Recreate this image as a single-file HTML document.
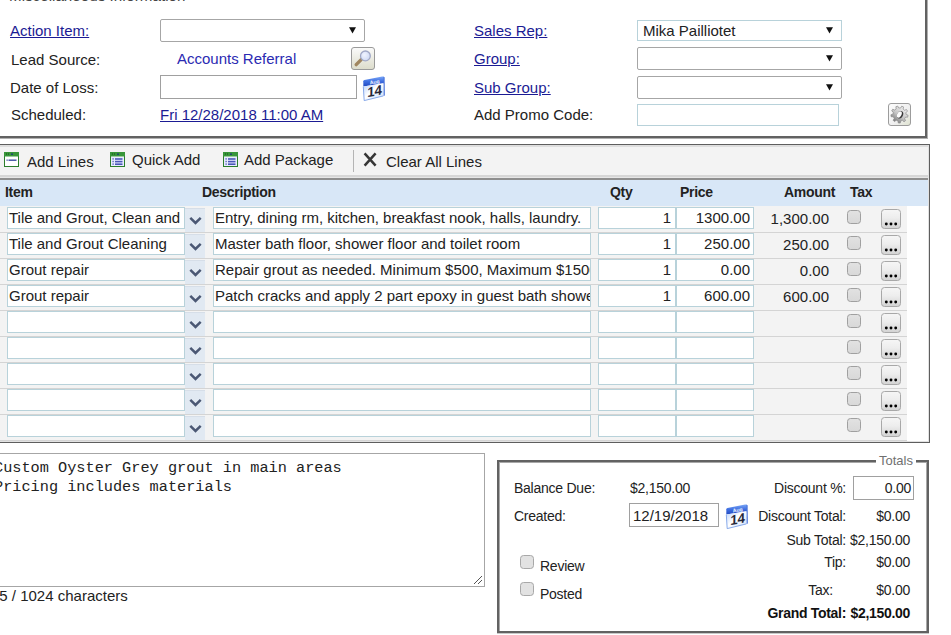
<!DOCTYPE html><html><head><meta charset="utf-8"><style>
html,body{margin:0;padding:0;background:#fff;width:951px;height:635px;overflow:hidden;position:relative}
body{font-family:"Liberation Sans",sans-serif}
.t{position:absolute;white-space:nowrap;line-height:18px}
.b{position:absolute;box-sizing:border-box}
.u{text-decoration:underline}
svg{position:absolute;overflow:visible}
</style></head><body>
<div class="t" style="left:9px;top:-13px;font-size:15.2px;color:#444;">Miscellaneous Information</div>
<div class="b" style="left:925px;top:0px;width:2px;height:138px;background:#626262"></div>
<div class="b" style="left:0px;top:136px;width:927px;height:2px;background:#626262"></div>
<div class="b" style="left:927px;top:0px;width:1px;height:139px;background:#b0b0b0"></div>
<div class="b" style="left:0px;top:138px;width:928px;height:1px;background:#b0b0b0"></div>
<div class="t" style="left:10px;top:22px;font-size:15px;color:#1b1b94;text-decoration:underline">Action Item:</div>
<div class="b" style="left:160px;top:19px;width:205px;height:23px;border:1px solid #a6a6a6;border-radius:2px;background:#fff"></div>
<svg style="left:349px;top:27px" width="7" height="7" viewBox="0 0 7 7"><path d="M0 0.3 L7 0.3 L3.5 6.5 Z" fill="#111"/></svg>
<div class="t" style="left:11px;top:51px;font-size:15px;color:#222;">Lead Source:</div>
<div class="t" style="left:177px;top:50px;font-size:15px;color:#2a2ab2;">Accounts Referral</div>
<svg style="left:351px;top:47px" width="24" height="23" viewBox="0 0 24 23">
<defs><linearGradient id="mg" x1="0" y1="0" x2="0" y2="1"><stop offset="0" stop-color="#fbfbfb"/><stop offset="1" stop-color="#dcdccb"/></linearGradient>
<radialGradient id="lens" cx="0.4" cy="0.4" r="0.6"><stop offset="0" stop-color="#f0f4ff"/><stop offset="1" stop-color="#d0daf4"/></radialGradient></defs>
<rect x="0.5" y="0.5" width="23" height="22" rx="2.5" fill="url(#mg)" stroke="#9a9a9a"/>
<line x1="5.2" y1="17.6" x2="10.2" y2="12.6" stroke="#a08660" stroke-width="3.4" stroke-linecap="round"/>
<circle cx="14.4" cy="8.9" r="4.9" fill="url(#lens)" stroke="#a0a8c6" stroke-width="1.3"/>
</svg>
<div class="t" style="left:10px;top:79px;font-size:15px;color:#222;">Date of Loss:</div>
<div class="b" style="left:160px;top:75px;width:197px;height:24px;border:1px solid #a0a0a0;background:#fff"></div>
<svg style="left:363px;top:76px" width="23" height="26" viewBox="0 0 23 26">
<defs><linearGradient id="cb363" x1="0" y1="0" x2="0" y2="1"><stop offset="0" stop-color="#7aa6f6"/><stop offset="0.5" stop-color="#3e6ee0"/><stop offset="1" stop-color="#2048c0"/></linearGradient>
<linearGradient id="cw363" x1="0" y1="0" x2="1" y2="1"><stop offset="0" stop-color="#b8d0fa"/><stop offset="0.45" stop-color="#ffffff"/><stop offset="1" stop-color="#c8daf8"/></linearGradient></defs>
<path d="M20 0.6 L21.6 1.2 L21.8 19.5 L20.4 19.9 Z" fill="#3d6ad8"/>
<path d="M0.3 5.2 Q0.3 4.2 1.4 3.9 L19.2 0.5 Q20.6 0.3 20.6 1.6 L20.6 7.2 L0.3 10.6 Z" fill="url(#cb363)"/>
<path d="M0.3 10.6 L20.6 7.2 L20.4 19.9 L1.2 24.6 Z" fill="url(#cw363)"/>
<path d="M0.3 10.6 L1.2 24.6 L20.4 19.9" fill="none" stroke="#7aa0e8" stroke-width="0.9"/>
<text x="0" y="0" font-size="5.2" font-weight="bold" fill="#f4f8ff" font-family="Liberation Sans" transform="translate(7,8.6) rotate(-10)">Aug</text>
<text x="0" y="0" font-size="13.5" font-weight="bold" fill="#262636" font-family="Liberation Sans" transform="translate(4.2,21.3) rotate(-11) skewX(-12)">14</text>
</svg>
<div class="t" style="left:11px;top:106px;font-size:15px;color:#222;">Scheduled:</div>
<div class="t" style="left:160px;top:106px;font-size:15px;color:#1b1b94;text-decoration:underline">Fri 12/28/2018 11:00 AM</div>
<div class="t" style="left:474px;top:22px;font-size:15px;color:#1b1b94;text-decoration:underline">Sales Rep:</div>
<div class="b" style="left:637px;top:20px;width:205px;height:21px;border:1px solid #b8d2da;background:#fff"></div>
<div class="t" style="left:643px;top:22px;font-size:15px;color:#222;">Mika Pailliotet</div>
<svg style="left:826px;top:27px" width="7" height="7" viewBox="0 0 7 7"><path d="M0 0.3 L7 0.3 L3.5 6.5 Z" fill="#111"/></svg>
<div class="t" style="left:474px;top:50px;font-size:15px;color:#1b1b94;text-decoration:underline">Group:</div>
<div class="b" style="left:637px;top:47px;width:205px;height:23px;border:1px solid #a6a6a6;border-radius:2px;background:#fff"></div>
<svg style="left:826px;top:55px" width="7" height="7" viewBox="0 0 7 7"><path d="M0 0.3 L7 0.3 L3.5 6.5 Z" fill="#111"/></svg>
<div class="t" style="left:474px;top:79px;font-size:15px;color:#1b1b94;text-decoration:underline">Sub Group:</div>
<div class="b" style="left:637px;top:76px;width:205px;height:23px;border:1px solid #a6a6a6;border-radius:2px;background:#fff"></div>
<svg style="left:826px;top:84px" width="7" height="7" viewBox="0 0 7 7"><path d="M0 0.3 L7 0.3 L3.5 6.5 Z" fill="#111"/></svg>
<div class="t" style="left:474px;top:106px;font-size:15px;color:#222;">Add Promo Code:</div>
<div class="b" style="left:637px;top:104px;width:202px;height:22px;border:1px solid #b8d2da;background:#fff"></div>
<svg style="left:888px;top:103px" width="23" height="23" viewBox="0 0 23 23">
<defs><linearGradient id="gg" x1="0" y1="0" x2="1" y2="1"><stop offset="0" stop-color="#fdfdfd"/><stop offset="0.6" stop-color="#efefef"/><stop offset="1" stop-color="#dfe3cf"/></linearGradient>
<linearGradient id="gr" x1="0.8" y1="0.1" x2="0.2" y2="0.9"><stop offset="0" stop-color="#f2f2f2"/><stop offset="0.55" stop-color="#c4c4c4"/><stop offset="1" stop-color="#7c7c7c"/></linearGradient></defs>
<rect x="0.5" y="0.5" width="22" height="22" rx="2.5" fill="url(#gg)" stroke="#9c9c9c"/>
<g transform="translate(11.5,11.5)">
<path d="M6.60 0.00 L8.57 0.72 L8.18 2.66 L6.08 2.56 L5.06 4.24 L6.10 6.06 L4.56 7.29 L3.02 5.87 L1.15 6.50 L0.78 8.56 L-1.20 8.52 L-1.46 6.44 L-3.30 5.72 L-4.91 7.06 L-6.39 5.75 L-5.26 3.99 L-6.20 2.26 L-8.30 2.25 L-8.59 0.30 L-6.59 -0.32 L-6.20 -2.26 L-7.81 -3.61 L-6.78 -5.29 L-4.84 -4.48 L-3.30 -5.72 L-3.66 -7.78 L-1.79 -8.41 L-0.83 -6.55 L1.15 -6.50 L2.20 -8.31 L4.04 -7.59 L3.58 -5.55 L5.06 -4.24 L7.03 -4.96 L7.97 -3.22 L6.30 -1.95 Z" fill="url(#gr)" stroke="#8a8a8a" stroke-width="0.7"/>
<ellipse cx="0.6" cy="0" rx="2.9" ry="3.9" fill="#3a3a3a" transform="rotate(28)"/><ellipse cx="-0.2" cy="0.1" rx="2.1" ry="3.5" fill="#fbfbfb" transform="rotate(28)"/>
</g></svg>
<div class="b" style="left:0px;top:144px;width:930px;height:299px;background:#f3f3f3"></div>
<div class="b" style="left:0px;top:144px;width:930px;height:1px;background:#5e5e5e"></div>
<div class="b" style="left:929px;top:144px;width:1px;height:299px;background:#5e5e5e"></div>
<div class="b" style="left:0px;top:441px;width:929px;height:1px;background:#e2e2e2"></div>
<div class="b" style="left:0px;top:442px;width:930px;height:1px;background:#5e5e5e"></div>
<div class="b" style="left:0px;top:145px;width:929px;height:2px;background:#dedede"></div>
<div class="b" style="left:928px;top:145px;width:1px;height:296px;background:#e2e2e2"></div>
<div class="b" style="left:0px;top:175px;width:928px;height:2px;background:#d6d6d6"></div>
<div class="b" style="left:0px;top:177px;width:928px;height:1px;background:#e6e6e6"></div>
<div class="b" style="left:0px;top:178px;width:928px;height:2px;background:#8e8e8e"></div>
<div class="b" style="left:0px;top:180px;width:928px;height:26px;background:#d8e7f7"></div>
<div class="b" style="left:907px;top:206px;width:21px;height:235px;background:#fff"></div>
<svg style="left:4px;top:152px" width="15" height="15" viewBox="0 0 15 15"><rect x="0.5" y="0.5" width="14" height="14" fill="#ffffff" stroke="#2b7d2b"/><rect x="0" y="0" width="15" height="4.5" fill="#38963a"/><rect x="2" y="1.5" width="1" height="1" fill="#145214"/><rect x="4" y="1.5" width="1" height="1" fill="#145214"/><rect x="7" y="1.5" width="2" height="1.3" fill="#1a3a7a"/><rect x="2.5" y="7.5" width="1.2" height="1.3" fill="#3a4aa0"/><rect x="4.5" y="7.5" width="8" height="1.4" fill="#3a4aa0"/></svg>
<div class="t" style="left:27px;top:153px;font-size:15px;color:#222;">Add Lines</div>
<svg style="left:110px;top:152px" width="15" height="15" viewBox="0 0 15 15"><rect x="0.5" y="0.5" width="14" height="14" fill="#ffffff" stroke="#2b7d2b"/><rect x="0" y="0" width="15" height="4.5" fill="#38963a"/><rect x="2" y="1.5" width="1" height="1" fill="#145214"/><rect x="4" y="1.5" width="1" height="1" fill="#145214"/><rect x="7" y="1.5" width="2" height="1.3" fill="#1a3a7a"/><rect x="1" y="5" width="13" height="9" fill="#e8ecff"/><rect x="2.5" y="6.2" width="1.2" height="1.4" fill="#4050b0"/><rect x="5" y="6.2" width="7.5" height="1.6" fill="#4a56b8"/><rect x="2.5" y="8.8" width="1.2" height="1.4" fill="#4050b0"/><rect x="5" y="8.8" width="7.5" height="1.6" fill="#4a56b8"/><rect x="2.5" y="11.4" width="1.2" height="1.4" fill="#4050b0"/><rect x="5" y="11.4" width="7.5" height="1.6" fill="#4a56b8"/></svg>
<div class="t" style="left:132px;top:151px;font-size:15px;color:#222;">Quick Add</div>
<svg style="left:223px;top:152px" width="15" height="15" viewBox="0 0 15 15"><rect x="0.5" y="0.5" width="14" height="14" fill="#ffffff" stroke="#2b7d2b"/><rect x="0" y="0" width="15" height="4.5" fill="#38963a"/><rect x="2" y="1.5" width="1" height="1" fill="#145214"/><rect x="4" y="1.5" width="1" height="1" fill="#145214"/><rect x="7" y="1.5" width="2" height="1.3" fill="#1a3a7a"/><rect x="1" y="5" width="13" height="9" fill="#e8ecff"/><rect x="2.5" y="6.2" width="1.2" height="1.4" fill="#4050b0"/><rect x="5" y="6.2" width="7.5" height="1.6" fill="#4a56b8"/><rect x="2.5" y="8.8" width="1.2" height="1.4" fill="#4050b0"/><rect x="5" y="8.8" width="7.5" height="1.6" fill="#4a56b8"/><rect x="2.5" y="11.4" width="1.2" height="1.4" fill="#4050b0"/><rect x="5" y="11.4" width="7.5" height="1.6" fill="#4a56b8"/></svg>
<div class="t" style="left:244px;top:151px;font-size:15px;color:#222;">Add Package</div>
<div class="b" style="left:353px;top:150px;width:1px;height:22px;background:#b4b4b4"></div>
<svg style="left:363px;top:152px" width="15" height="15" viewBox="0 0 15 15"><path d="M1.6 1.4 L12.6 13.6 M12.6 1.4 L1.6 13.6" stroke="#363636" stroke-width="2.5"/></svg>
<div class="t" style="left:386px;top:153px;font-size:15px;color:#222;">Clear All Lines</div>
<div class="t" style="left:5px;top:183px;font-size:14px;color:#222;font-weight:bold;letter-spacing:-0.3px">Item</div>
<div class="t" style="left:202px;top:183px;font-size:14px;color:#222;font-weight:bold;letter-spacing:-0.3px">Description</div>
<div class="t" style="left:610px;top:183px;font-size:14px;color:#222;font-weight:bold;letter-spacing:-0.3px">Qty</div>
<div class="t" style="left:680px;top:183px;font-size:14px;color:#222;font-weight:bold;letter-spacing:-0.3px">Price</div>
<div class="t" style="left:784px;top:183px;font-size:14px;color:#222;font-weight:bold;letter-spacing:-0.3px">Amount</div>
<div class="t" style="left:850px;top:183px;font-size:14px;color:#222;font-weight:bold;letter-spacing:-0.3px">Tax</div>
<div class="b" style="left:0px;top:232px;width:907px;height:1px;background:#d4d4d4"></div>
<div class="b" style="left:7px;top:207px;width:178px;height:22px;border:1px solid #b8d2da;background:#fff"></div>
<div class="b" style="left:185px;top:208px;width:20px;height:24px;background:#e1e9f2;box-shadow:inset 0 1px 0 #d6dee8"></div>
<svg style="left:189px;top:217px" width="13" height="8" viewBox="0 0 13 8"><path d="M1.3 0.9 L6.5 5.9 L11.7 0.9" fill="none" stroke="#4b5874" stroke-width="2.5"/></svg>
<div class="b" style="left:213px;top:207px;width:378px;height:22px;border:1px solid #b8d2da;background:#fff"></div>
<div class="b" style="left:598px;top:207px;width:78px;height:22px;border:1px solid #b8d2da;background:#fff"></div>
<div class="b" style="left:676px;top:207px;width:78px;height:22px;border:1px solid #b8d2da;background:#fff"></div>
<svg style="left:847px;top:210px" width="14" height="14" viewBox="0 0 14 14"><defs><linearGradient id="ck0" x1="0" y1="0" x2="0" y2="1"><stop offset="0" stop-color="#e2e2e2"/><stop offset="1" stop-color="#d8d8d8"/></linearGradient></defs><rect x="0.5" y="0.5" width="13" height="13" rx="3" fill="url(#ck0)" stroke="#a0a0a0"/></svg>
<svg style="left:881px;top:209px" width="20" height="20" viewBox="0 0 20 20"><defs><linearGradient id="db0" x1="0" y1="0" x2="0" y2="1"><stop offset="0" stop-color="#f6f6f6"/><stop offset="0.45" stop-color="#ededed"/><stop offset="1" stop-color="#d2d2d2"/></linearGradient></defs><rect x="0.5" y="0.5" width="19" height="19" rx="3" fill="url(#db0)" stroke="#a8a8a8"/><circle cx="5.3" cy="15" r="1.45" fill="#000"/><circle cx="10" cy="15" r="1.45" fill="#000"/><circle cx="14.7" cy="15" r="1.45" fill="#000"/></svg>
<div class="t" style="left:9px;top:209px;font-size:15px;color:#222;">Tile and Grout, Clean and</div>
<div class="t" style="left:215px;top:209px;width:375px;overflow:hidden;font-size:15px;color:#222">Entry, dining rm, kitchen, breakfast nook, halls, laundry.</div>
<div class="t" style="right:280px;top:209px;font-size:15px;color:#222;text-align:right;">1</div>
<div class="t" style="right:201px;top:209px;font-size:15px;color:#222;text-align:right;">1300.00</div>
<div class="t" style="right:122px;top:210px;font-size:15px;color:#222;text-align:right;">1,300.00</div>
<div class="b" style="left:0px;top:258px;width:907px;height:1px;background:#d4d4d4"></div>
<div class="b" style="left:7px;top:233px;width:178px;height:22px;border:1px solid #b8d2da;background:#fff"></div>
<div class="b" style="left:185px;top:234px;width:20px;height:24px;background:#e1e9f2;box-shadow:inset 0 1px 0 #d6dee8"></div>
<svg style="left:189px;top:243px" width="13" height="8" viewBox="0 0 13 8"><path d="M1.3 0.9 L6.5 5.9 L11.7 0.9" fill="none" stroke="#4b5874" stroke-width="2.5"/></svg>
<div class="b" style="left:213px;top:233px;width:378px;height:22px;border:1px solid #b8d2da;background:#fff"></div>
<div class="b" style="left:598px;top:233px;width:78px;height:22px;border:1px solid #b8d2da;background:#fff"></div>
<div class="b" style="left:676px;top:233px;width:78px;height:22px;border:1px solid #b8d2da;background:#fff"></div>
<svg style="left:847px;top:236px" width="14" height="14" viewBox="0 0 14 14"><defs><linearGradient id="ck1" x1="0" y1="0" x2="0" y2="1"><stop offset="0" stop-color="#e2e2e2"/><stop offset="1" stop-color="#d8d8d8"/></linearGradient></defs><rect x="0.5" y="0.5" width="13" height="13" rx="3" fill="url(#ck1)" stroke="#a0a0a0"/></svg>
<svg style="left:881px;top:235px" width="20" height="20" viewBox="0 0 20 20"><defs><linearGradient id="db1" x1="0" y1="0" x2="0" y2="1"><stop offset="0" stop-color="#f6f6f6"/><stop offset="0.45" stop-color="#ededed"/><stop offset="1" stop-color="#d2d2d2"/></linearGradient></defs><rect x="0.5" y="0.5" width="19" height="19" rx="3" fill="url(#db1)" stroke="#a8a8a8"/><circle cx="5.3" cy="15" r="1.45" fill="#000"/><circle cx="10" cy="15" r="1.45" fill="#000"/><circle cx="14.7" cy="15" r="1.45" fill="#000"/></svg>
<div class="t" style="left:9px;top:235px;font-size:15px;color:#222;">Tile and Grout Cleaning</div>
<div class="t" style="left:215px;top:235px;width:375px;overflow:hidden;font-size:15px;color:#222">Master bath floor, shower floor and toilet room</div>
<div class="t" style="right:280px;top:235px;font-size:15px;color:#222;text-align:right;">1</div>
<div class="t" style="right:201px;top:235px;font-size:15px;color:#222;text-align:right;">250.00</div>
<div class="t" style="right:122px;top:236px;font-size:15px;color:#222;text-align:right;">250.00</div>
<div class="b" style="left:0px;top:284px;width:907px;height:1px;background:#d4d4d4"></div>
<div class="b" style="left:7px;top:259px;width:178px;height:22px;border:1px solid #b8d2da;background:#fff"></div>
<div class="b" style="left:185px;top:260px;width:20px;height:24px;background:#e1e9f2;box-shadow:inset 0 1px 0 #d6dee8"></div>
<svg style="left:189px;top:269px" width="13" height="8" viewBox="0 0 13 8"><path d="M1.3 0.9 L6.5 5.9 L11.7 0.9" fill="none" stroke="#4b5874" stroke-width="2.5"/></svg>
<div class="b" style="left:213px;top:259px;width:378px;height:22px;border:1px solid #b8d2da;background:#fff"></div>
<div class="b" style="left:598px;top:259px;width:78px;height:22px;border:1px solid #b8d2da;background:#fff"></div>
<div class="b" style="left:676px;top:259px;width:78px;height:22px;border:1px solid #b8d2da;background:#fff"></div>
<svg style="left:847px;top:262px" width="14" height="14" viewBox="0 0 14 14"><defs><linearGradient id="ck2" x1="0" y1="0" x2="0" y2="1"><stop offset="0" stop-color="#e2e2e2"/><stop offset="1" stop-color="#d8d8d8"/></linearGradient></defs><rect x="0.5" y="0.5" width="13" height="13" rx="3" fill="url(#ck2)" stroke="#a0a0a0"/></svg>
<svg style="left:881px;top:261px" width="20" height="20" viewBox="0 0 20 20"><defs><linearGradient id="db2" x1="0" y1="0" x2="0" y2="1"><stop offset="0" stop-color="#f6f6f6"/><stop offset="0.45" stop-color="#ededed"/><stop offset="1" stop-color="#d2d2d2"/></linearGradient></defs><rect x="0.5" y="0.5" width="19" height="19" rx="3" fill="url(#db2)" stroke="#a8a8a8"/><circle cx="5.3" cy="15" r="1.45" fill="#000"/><circle cx="10" cy="15" r="1.45" fill="#000"/><circle cx="14.7" cy="15" r="1.45" fill="#000"/></svg>
<div class="t" style="left:9px;top:261px;font-size:15px;color:#222;">Grout repair</div>
<div class="t" style="left:215px;top:261px;width:375px;overflow:hidden;font-size:15px;color:#222">Repair grout as needed. Minimum $500, Maximum $1500</div>
<div class="t" style="right:280px;top:261px;font-size:15px;color:#222;text-align:right;">1</div>
<div class="t" style="right:201px;top:261px;font-size:15px;color:#222;text-align:right;">0.00</div>
<div class="t" style="right:122px;top:262px;font-size:15px;color:#222;text-align:right;">0.00</div>
<div class="b" style="left:0px;top:310px;width:907px;height:1px;background:#d4d4d4"></div>
<div class="b" style="left:7px;top:285px;width:178px;height:22px;border:1px solid #b8d2da;background:#fff"></div>
<div class="b" style="left:185px;top:286px;width:20px;height:24px;background:#e1e9f2;box-shadow:inset 0 1px 0 #d6dee8"></div>
<svg style="left:189px;top:295px" width="13" height="8" viewBox="0 0 13 8"><path d="M1.3 0.9 L6.5 5.9 L11.7 0.9" fill="none" stroke="#4b5874" stroke-width="2.5"/></svg>
<div class="b" style="left:213px;top:285px;width:378px;height:22px;border:1px solid #b8d2da;background:#fff"></div>
<div class="b" style="left:598px;top:285px;width:78px;height:22px;border:1px solid #b8d2da;background:#fff"></div>
<div class="b" style="left:676px;top:285px;width:78px;height:22px;border:1px solid #b8d2da;background:#fff"></div>
<svg style="left:847px;top:288px" width="14" height="14" viewBox="0 0 14 14"><defs><linearGradient id="ck3" x1="0" y1="0" x2="0" y2="1"><stop offset="0" stop-color="#e2e2e2"/><stop offset="1" stop-color="#d8d8d8"/></linearGradient></defs><rect x="0.5" y="0.5" width="13" height="13" rx="3" fill="url(#ck3)" stroke="#a0a0a0"/></svg>
<svg style="left:881px;top:287px" width="20" height="20" viewBox="0 0 20 20"><defs><linearGradient id="db3" x1="0" y1="0" x2="0" y2="1"><stop offset="0" stop-color="#f6f6f6"/><stop offset="0.45" stop-color="#ededed"/><stop offset="1" stop-color="#d2d2d2"/></linearGradient></defs><rect x="0.5" y="0.5" width="19" height="19" rx="3" fill="url(#db3)" stroke="#a8a8a8"/><circle cx="5.3" cy="15" r="1.45" fill="#000"/><circle cx="10" cy="15" r="1.45" fill="#000"/><circle cx="14.7" cy="15" r="1.45" fill="#000"/></svg>
<div class="t" style="left:9px;top:287px;font-size:15px;color:#222;">Grout repair</div>
<div class="t" style="left:215px;top:287px;width:375px;overflow:hidden;font-size:15px;color:#222">Patch cracks and apply 2 part epoxy in guest bath shower</div>
<div class="t" style="right:280px;top:287px;font-size:15px;color:#222;text-align:right;">1</div>
<div class="t" style="right:201px;top:287px;font-size:15px;color:#222;text-align:right;">600.00</div>
<div class="t" style="right:122px;top:288px;font-size:15px;color:#222;text-align:right;">600.00</div>
<div class="b" style="left:0px;top:336px;width:907px;height:1px;background:#d4d4d4"></div>
<div class="b" style="left:7px;top:311px;width:178px;height:22px;border:1px solid #b8d2da;background:#fff"></div>
<div class="b" style="left:185px;top:312px;width:20px;height:24px;background:#e1e9f2;box-shadow:inset 0 1px 0 #d6dee8"></div>
<svg style="left:189px;top:321px" width="13" height="8" viewBox="0 0 13 8"><path d="M1.3 0.9 L6.5 5.9 L11.7 0.9" fill="none" stroke="#4b5874" stroke-width="2.5"/></svg>
<div class="b" style="left:213px;top:311px;width:378px;height:22px;border:1px solid #b8d2da;background:#fff"></div>
<div class="b" style="left:598px;top:311px;width:78px;height:22px;border:1px solid #b8d2da;background:#fff"></div>
<div class="b" style="left:676px;top:311px;width:78px;height:22px;border:1px solid #b8d2da;background:#fff"></div>
<svg style="left:847px;top:314px" width="14" height="14" viewBox="0 0 14 14"><defs><linearGradient id="ck4" x1="0" y1="0" x2="0" y2="1"><stop offset="0" stop-color="#e2e2e2"/><stop offset="1" stop-color="#d8d8d8"/></linearGradient></defs><rect x="0.5" y="0.5" width="13" height="13" rx="3" fill="url(#ck4)" stroke="#a0a0a0"/></svg>
<svg style="left:881px;top:313px" width="20" height="20" viewBox="0 0 20 20"><defs><linearGradient id="db4" x1="0" y1="0" x2="0" y2="1"><stop offset="0" stop-color="#f6f6f6"/><stop offset="0.45" stop-color="#ededed"/><stop offset="1" stop-color="#d2d2d2"/></linearGradient></defs><rect x="0.5" y="0.5" width="19" height="19" rx="3" fill="url(#db4)" stroke="#a8a8a8"/><circle cx="5.3" cy="15" r="1.45" fill="#000"/><circle cx="10" cy="15" r="1.45" fill="#000"/><circle cx="14.7" cy="15" r="1.45" fill="#000"/></svg>
<div class="b" style="left:0px;top:362px;width:907px;height:1px;background:#d4d4d4"></div>
<div class="b" style="left:7px;top:337px;width:178px;height:22px;border:1px solid #b8d2da;background:#fff"></div>
<div class="b" style="left:185px;top:338px;width:20px;height:24px;background:#e1e9f2;box-shadow:inset 0 1px 0 #d6dee8"></div>
<svg style="left:189px;top:347px" width="13" height="8" viewBox="0 0 13 8"><path d="M1.3 0.9 L6.5 5.9 L11.7 0.9" fill="none" stroke="#4b5874" stroke-width="2.5"/></svg>
<div class="b" style="left:213px;top:337px;width:378px;height:22px;border:1px solid #b8d2da;background:#fff"></div>
<div class="b" style="left:598px;top:337px;width:78px;height:22px;border:1px solid #b8d2da;background:#fff"></div>
<div class="b" style="left:676px;top:337px;width:78px;height:22px;border:1px solid #b8d2da;background:#fff"></div>
<svg style="left:847px;top:340px" width="14" height="14" viewBox="0 0 14 14"><defs><linearGradient id="ck5" x1="0" y1="0" x2="0" y2="1"><stop offset="0" stop-color="#e2e2e2"/><stop offset="1" stop-color="#d8d8d8"/></linearGradient></defs><rect x="0.5" y="0.5" width="13" height="13" rx="3" fill="url(#ck5)" stroke="#a0a0a0"/></svg>
<svg style="left:881px;top:339px" width="20" height="20" viewBox="0 0 20 20"><defs><linearGradient id="db5" x1="0" y1="0" x2="0" y2="1"><stop offset="0" stop-color="#f6f6f6"/><stop offset="0.45" stop-color="#ededed"/><stop offset="1" stop-color="#d2d2d2"/></linearGradient></defs><rect x="0.5" y="0.5" width="19" height="19" rx="3" fill="url(#db5)" stroke="#a8a8a8"/><circle cx="5.3" cy="15" r="1.45" fill="#000"/><circle cx="10" cy="15" r="1.45" fill="#000"/><circle cx="14.7" cy="15" r="1.45" fill="#000"/></svg>
<div class="b" style="left:0px;top:388px;width:907px;height:1px;background:#d4d4d4"></div>
<div class="b" style="left:7px;top:363px;width:178px;height:22px;border:1px solid #b8d2da;background:#fff"></div>
<div class="b" style="left:185px;top:364px;width:20px;height:24px;background:#e1e9f2;box-shadow:inset 0 1px 0 #d6dee8"></div>
<svg style="left:189px;top:373px" width="13" height="8" viewBox="0 0 13 8"><path d="M1.3 0.9 L6.5 5.9 L11.7 0.9" fill="none" stroke="#4b5874" stroke-width="2.5"/></svg>
<div class="b" style="left:213px;top:363px;width:378px;height:22px;border:1px solid #b8d2da;background:#fff"></div>
<div class="b" style="left:598px;top:363px;width:78px;height:22px;border:1px solid #b8d2da;background:#fff"></div>
<div class="b" style="left:676px;top:363px;width:78px;height:22px;border:1px solid #b8d2da;background:#fff"></div>
<svg style="left:847px;top:366px" width="14" height="14" viewBox="0 0 14 14"><defs><linearGradient id="ck6" x1="0" y1="0" x2="0" y2="1"><stop offset="0" stop-color="#e2e2e2"/><stop offset="1" stop-color="#d8d8d8"/></linearGradient></defs><rect x="0.5" y="0.5" width="13" height="13" rx="3" fill="url(#ck6)" stroke="#a0a0a0"/></svg>
<svg style="left:881px;top:365px" width="20" height="20" viewBox="0 0 20 20"><defs><linearGradient id="db6" x1="0" y1="0" x2="0" y2="1"><stop offset="0" stop-color="#f6f6f6"/><stop offset="0.45" stop-color="#ededed"/><stop offset="1" stop-color="#d2d2d2"/></linearGradient></defs><rect x="0.5" y="0.5" width="19" height="19" rx="3" fill="url(#db6)" stroke="#a8a8a8"/><circle cx="5.3" cy="15" r="1.45" fill="#000"/><circle cx="10" cy="15" r="1.45" fill="#000"/><circle cx="14.7" cy="15" r="1.45" fill="#000"/></svg>
<div class="b" style="left:0px;top:414px;width:907px;height:1px;background:#d4d4d4"></div>
<div class="b" style="left:7px;top:389px;width:178px;height:22px;border:1px solid #b8d2da;background:#fff"></div>
<div class="b" style="left:185px;top:390px;width:20px;height:24px;background:#e1e9f2;box-shadow:inset 0 1px 0 #d6dee8"></div>
<svg style="left:189px;top:399px" width="13" height="8" viewBox="0 0 13 8"><path d="M1.3 0.9 L6.5 5.9 L11.7 0.9" fill="none" stroke="#4b5874" stroke-width="2.5"/></svg>
<div class="b" style="left:213px;top:389px;width:378px;height:22px;border:1px solid #b8d2da;background:#fff"></div>
<div class="b" style="left:598px;top:389px;width:78px;height:22px;border:1px solid #b8d2da;background:#fff"></div>
<div class="b" style="left:676px;top:389px;width:78px;height:22px;border:1px solid #b8d2da;background:#fff"></div>
<svg style="left:847px;top:392px" width="14" height="14" viewBox="0 0 14 14"><defs><linearGradient id="ck7" x1="0" y1="0" x2="0" y2="1"><stop offset="0" stop-color="#e2e2e2"/><stop offset="1" stop-color="#d8d8d8"/></linearGradient></defs><rect x="0.5" y="0.5" width="13" height="13" rx="3" fill="url(#ck7)" stroke="#a0a0a0"/></svg>
<svg style="left:881px;top:391px" width="20" height="20" viewBox="0 0 20 20"><defs><linearGradient id="db7" x1="0" y1="0" x2="0" y2="1"><stop offset="0" stop-color="#f6f6f6"/><stop offset="0.45" stop-color="#ededed"/><stop offset="1" stop-color="#d2d2d2"/></linearGradient></defs><rect x="0.5" y="0.5" width="19" height="19" rx="3" fill="url(#db7)" stroke="#a8a8a8"/><circle cx="5.3" cy="15" r="1.45" fill="#000"/><circle cx="10" cy="15" r="1.45" fill="#000"/><circle cx="14.7" cy="15" r="1.45" fill="#000"/></svg>
<div class="b" style="left:0px;top:440px;width:907px;height:1px;background:#d4d4d4"></div>
<div class="b" style="left:7px;top:415px;width:178px;height:22px;border:1px solid #b8d2da;background:#fff"></div>
<div class="b" style="left:185px;top:416px;width:20px;height:24px;background:#e1e9f2;box-shadow:inset 0 1px 0 #d6dee8"></div>
<svg style="left:189px;top:425px" width="13" height="8" viewBox="0 0 13 8"><path d="M1.3 0.9 L6.5 5.9 L11.7 0.9" fill="none" stroke="#4b5874" stroke-width="2.5"/></svg>
<div class="b" style="left:213px;top:415px;width:378px;height:22px;border:1px solid #b8d2da;background:#fff"></div>
<div class="b" style="left:598px;top:415px;width:78px;height:22px;border:1px solid #b8d2da;background:#fff"></div>
<div class="b" style="left:676px;top:415px;width:78px;height:22px;border:1px solid #b8d2da;background:#fff"></div>
<svg style="left:847px;top:418px" width="14" height="14" viewBox="0 0 14 14"><defs><linearGradient id="ck8" x1="0" y1="0" x2="0" y2="1"><stop offset="0" stop-color="#e2e2e2"/><stop offset="1" stop-color="#d8d8d8"/></linearGradient></defs><rect x="0.5" y="0.5" width="13" height="13" rx="3" fill="url(#ck8)" stroke="#a0a0a0"/></svg>
<svg style="left:881px;top:417px" width="20" height="20" viewBox="0 0 20 20"><defs><linearGradient id="db8" x1="0" y1="0" x2="0" y2="1"><stop offset="0" stop-color="#f6f6f6"/><stop offset="0.45" stop-color="#ededed"/><stop offset="1" stop-color="#d2d2d2"/></linearGradient></defs><rect x="0.5" y="0.5" width="19" height="19" rx="3" fill="url(#db8)" stroke="#a8a8a8"/><circle cx="5.3" cy="15" r="1.45" fill="#000"/><circle cx="10" cy="15" r="1.45" fill="#000"/><circle cx="14.7" cy="15" r="1.45" fill="#000"/></svg>
<div class="b" style="left:-5px;top:453px;width:490px;height:134px;border:1px solid #a6a6a6;background:#fff"></div>
<div class="t" style="left:-6px;top:459px;font-family:'Liberation Mono',monospace;font-size:15.25px;line-height:18.5px;color:#222;white-space:pre">Custom Oyster Grey grout in main areas
Pricing includes materials</div>
<svg style="left:472px;top:574px" width="12" height="12" viewBox="0 0 12 12"><path d="M2 10 L10 2 M6 10 L10 6" stroke="#555" stroke-width="1"/></svg>
<div class="t" style="left:-9px;top:587px;font-size:15px;color:#222;">65 / 1024 characters</div>
<div class="b" style="left:497px;top:460px;width:432px;height:173px;border:2px solid #626262;box-shadow:inset 1px 1px 0 #a8a8a8, inset -1px 0 0 #a8a8a8, 0 1px 0 #c8c8c8"></div>
<div class="b" style="left:876px;top:452px;width:40px;height:16px;background:#fff"></div>
<div class="t" style="left:879px;top:452px;font-size:13px;color:#707070;">Totals</div>
<div class="t" style="left:514px;top:479px;font-size:14px;color:#222;letter-spacing:-0.25px">Balance Due:</div>
<div class="t" style="left:630px;top:479px;font-size:14px;color:#222;letter-spacing:-0.25px">$2,150.00</div>
<div class="t" style="left:514px;top:507px;font-size:14px;color:#222;letter-spacing:-0.25px">Created:</div>
<div class="b" style="left:629px;top:503px;width:90px;height:24px;border:1px solid #a0a0a0;background:#fff"></div>
<div class="t" style="left:633px;top:507px;font-size:15px;color:#222;">12/19/2018</div>
<svg style="left:726px;top:504px" width="23" height="26" viewBox="0 0 23 26">
<defs><linearGradient id="cb726" x1="0" y1="0" x2="0" y2="1"><stop offset="0" stop-color="#7aa6f6"/><stop offset="0.5" stop-color="#3e6ee0"/><stop offset="1" stop-color="#2048c0"/></linearGradient>
<linearGradient id="cw726" x1="0" y1="0" x2="1" y2="1"><stop offset="0" stop-color="#b8d0fa"/><stop offset="0.45" stop-color="#ffffff"/><stop offset="1" stop-color="#c8daf8"/></linearGradient></defs>
<path d="M20 0.6 L21.6 1.2 L21.8 19.5 L20.4 19.9 Z" fill="#3d6ad8"/>
<path d="M0.3 5.2 Q0.3 4.2 1.4 3.9 L19.2 0.5 Q20.6 0.3 20.6 1.6 L20.6 7.2 L0.3 10.6 Z" fill="url(#cb726)"/>
<path d="M0.3 10.6 L20.6 7.2 L20.4 19.9 L1.2 24.6 Z" fill="url(#cw726)"/>
<path d="M0.3 10.6 L1.2 24.6 L20.4 19.9" fill="none" stroke="#7aa0e8" stroke-width="0.9"/>
<text x="0" y="0" font-size="5.2" font-weight="bold" fill="#f4f8ff" font-family="Liberation Sans" transform="translate(7,8.6) rotate(-10)">Aug</text>
<text x="0" y="0" font-size="13.5" font-weight="bold" fill="#262636" font-family="Liberation Sans" transform="translate(4.2,21.3) rotate(-11) skewX(-12)">14</text>
</svg>
<div class="t" style="right:105px;top:479px;font-size:14px;color:#222;text-align:right;letter-spacing:-0.25px">Discount %:</div>
<div class="b" style="left:853px;top:476px;width:61px;height:24px;border:1px solid #a0a0a0;background:#fff"></div>
<div class="t" style="right:40px;top:479px;font-size:14px;color:#222;text-align:right;letter-spacing:-0.25px">0.00</div>
<div class="t" style="right:105px;top:507px;font-size:14px;color:#222;text-align:right;letter-spacing:-0.25px">Discount Total:</div>
<div class="t" style="right:41px;top:507px;font-size:14px;color:#222;text-align:right;letter-spacing:-0.25px">$0.00</div>
<div class="t" style="right:105px;top:531px;font-size:14px;color:#222;text-align:right;letter-spacing:-0.25px">Sub Total:</div>
<div class="t" style="right:41px;top:531px;font-size:14px;color:#222;text-align:right;letter-spacing:-0.25px">$2,150.00</div>
<div class="t" style="right:105px;top:553px;font-size:14px;color:#222;text-align:right;letter-spacing:-0.25px">Tip:</div>
<div class="t" style="right:41px;top:553px;font-size:14px;color:#222;text-align:right;letter-spacing:-0.25px">$0.00</div>
<div class="t" style="right:118px;top:581px;font-size:14px;color:#222;text-align:right;letter-spacing:-0.25px">Tax:</div>
<div class="t" style="right:41px;top:581px;font-size:14px;color:#222;text-align:right;letter-spacing:-0.25px">$0.00</div>
<div class="t" style="right:105px;top:604px;font-size:14px;color:#111;font-weight:bold;text-align:right;letter-spacing:-0.3px">Grand Total:</div>
<div class="t" style="right:41px;top:604px;font-size:14px;color:#111;font-weight:bold;text-align:right;letter-spacing:-0.3px">$2,150.00</div>
<svg style="left:520px;top:555px" width="14" height="14" viewBox="0 0 14 14"><rect x="0.5" y="0.5" width="13" height="13" rx="3" fill="#e2e2e2" stroke="#a8a8a8"/></svg>
<div class="t" style="left:540px;top:557px;font-size:14px;color:#222;letter-spacing:-0.25px">Review</div>
<svg style="left:520px;top:582px" width="14" height="14" viewBox="0 0 14 14"><rect x="0.5" y="0.5" width="13" height="13" rx="3" fill="#e2e2e2" stroke="#a8a8a8"/></svg>
<div class="t" style="left:540px;top:585px;font-size:14px;color:#222;letter-spacing:-0.25px">Posted</div>
</body></html>
